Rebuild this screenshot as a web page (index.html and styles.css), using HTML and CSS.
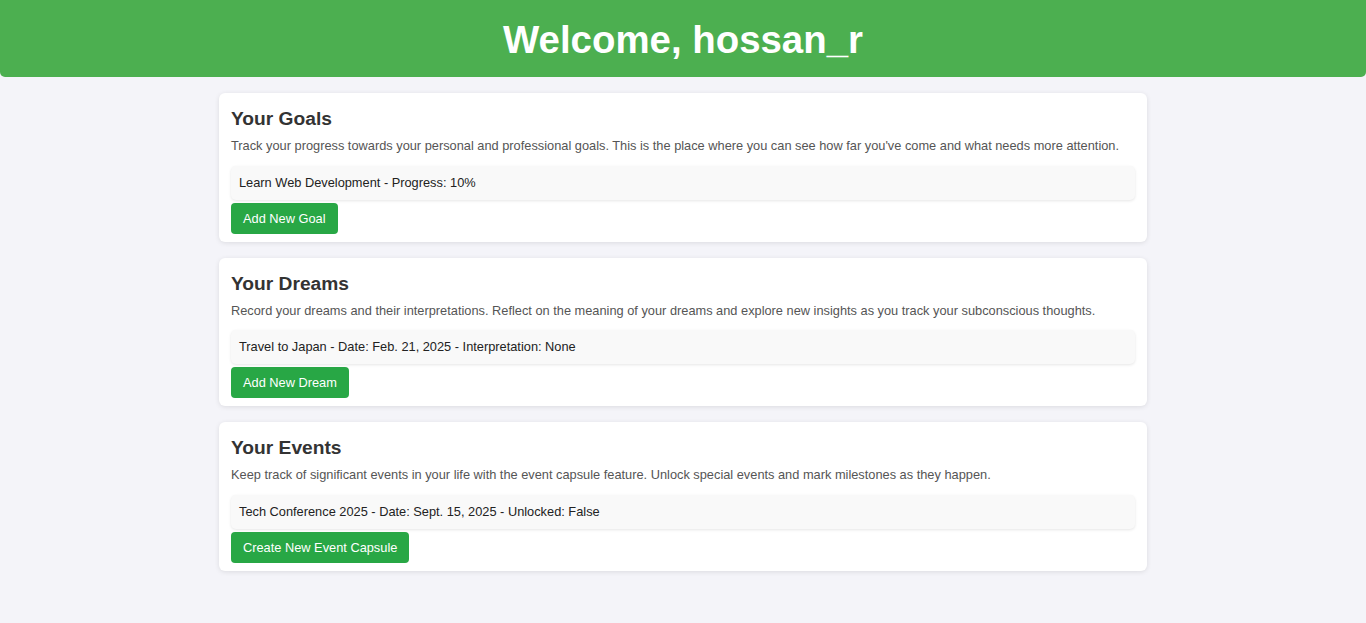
FILE: index.html
```html
<!DOCTYPE html>
<html lang="en">
<head>
<meta charset="utf-8">
<title>Dashboard</title>
<link rel="stylesheet" href="styles.css">
</head>
<body>
<header class="header">
  <h1 class="header-title">Welcome, hossan_r</h1>
</header>
<main class="container">
  <section class="card">
    <h2 class="card-title">Your Goals</h2>
    <p class="card-text">Track your progress towards your personal and professional goals. This is the place where you can see how far you've come and what needs more attention.</p>
    <ul class="item-list">
      <li class="item">Learn Web Development - Progress: 10%</li>
    </ul>
    <a class="btn" href="#">Add New Goal</a>
  </section>
  <section class="card">
    <h2 class="card-title">Your Dreams</h2>
    <p class="card-text">Record your dreams and their interpretations. Reflect on the meaning of your dreams and explore new insights as you track your subconscious thoughts.</p>
    <ul class="item-list">
      <li class="item">Travel to Japan - Date: Feb. 21, 2025 - Interpretation: None</li>
    </ul>
    <a class="btn" href="#">Add New Dream</a>
  </section>
  <section class="card">
    <h2 class="card-title">Your Events</h2>
    <p class="card-text">Keep track of significant events in your life with the event capsule feature. Unlock special events and mark milestones as they happen.</p>
    <ul class="item-list">
      <li class="item">Tech Conference 2025 - Date: Sept. 15, 2025 - Unlocked: False</li>
    </ul>
    <a class="btn" href="#">Create New Event Capsule</a>
  </section>
</main>
</body>
</html>
```
FILE: styles.css
```css
* { box-sizing: border-box; }
body {
  margin: 0;
  background: #f4f4f9;
  font-family: "Liberation Sans", Arial, sans-serif;
  color: #333;
}
.header {
  background: #4caf50;
  border-radius: 0 0 5px 5px;
  height: 77px;
  display: flex;
  align-items: center;
  justify-content: center;
  padding-top: 2px;
}
.header-title {
  margin: 0;
  color: #fff;
  font-size: 38.4px;
  font-weight: bold;
}
.container {
  width: 928px;
  margin: 16px auto;
  display: flex;
  flex-direction: column;
  gap: 16px;
}
.card {
  background: #fff;
  border-radius: 6px;
  padding: 12px 12px 8px;
  box-shadow: 0 1px 5px rgba(0,0,0,0.1);
}
.card-title {
  margin: 0;
  font-size: 19.2px;
  line-height: 28px;
  color: #333;
}
.card-text {
  margin: 4px 0 10.5px;
  font-size: 12.8px;
  line-height: 18px;
  color: #555;
}
.item-list {
  list-style: none;
  margin: 0 0 3px;
  padding: 0;
}
.item {
  background: #f9f9f9;
  padding: 9px 8px;
  font-size: 12.8px;
  line-height: 16px;
  color: #222;
  border-radius: 5px;
  box-shadow: 0 1px 3px rgba(0,0,0,0.1);
}
.btn {
  display: inline-block;
  vertical-align: top;
  background: #28a745;
  color: #fff;
  text-decoration: none;
  font-size: 12.8px;
  line-height: 15px;
  padding: 8px 12px;
  border-radius: 4px;
}
```
